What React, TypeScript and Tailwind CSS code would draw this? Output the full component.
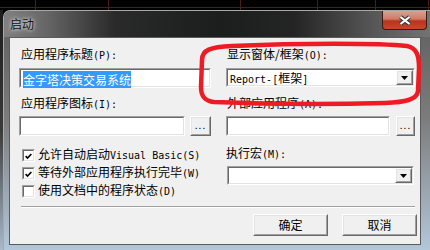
import { FC, ReactNode } from 'react';

// half-width latin, the way SimSun draws it next to CJK
const M: FC<{ children: ReactNode }> = ({ children }) => (
	<span className="[font-family:'DejaVu_Sans_Mono',monospace] text-[10px]">{children}</span>
);

const Sunken: FC<{ className?: string; children?: ReactNode }> = ({ className = '', children }) => (
	<div className={`border border-t-[#a0a0a0] border-l-[#a0a0a0] border-b-white border-r-white ${className}`}>
		<div className="flex h-full border border-t-[#696969] border-l-[#696969] border-b-[#e3e3e3] border-r-[#e3e3e3] bg-white">
			{children}
		</div>
	</div>
);

const Raised: FC<{ className?: string; children?: ReactNode }> = ({ className = '', children }) => (
	<div className={`border border-t-white border-l-white border-b-[#696969] border-r-[#696969] ${className}`}>
		<div className="flex h-full items-center justify-center border border-t-[#e3e3e3] border-l-[#e3e3e3] border-b-[#a0a0a0] border-r-[#a0a0a0] bg-[#f0f0f0]">
			{children}
		</div>
	</div>
);

const Combo: FC<{ className?: string; value?: ReactNode }> = ({ className = '', value }) => (
	<Sunken className={className}>
		<div className="flex-1 pl-[2px] leading-[15px]">{value}</div>
		<Raised className="w-[17px]">
			<svg width="7" height="4" viewBox="0 0 7 4">
				<path d="M0 0H7L3.5 4Z" fill="#000" />
			</svg>
		</Raised>
	</Sunken>
);

const Dots = () => <span className="-mt-[3px] text-[10px] leading-none tracking-[1px]">...</span>;

const Check: FC<{ checked?: boolean; children: ReactNode }> = ({ checked, children }) => (
	<div className="flex h-[18px] items-center gap-[3px]">
		<Sunken className="h-[13px] w-[13px] shrink-0">
			{checked && (
				<svg width="11" height="11" viewBox="0 0 11 11">
					<path d="M2 5L4.3 7.5L9 2.5" fill="none" stroke="#000" strokeWidth="2" />
				</svg>
			)}
		</Sunken>
		<span className="whitespace-nowrap leading-[14px]">{children}</span>
	</div>
);

export default function App() {
	return (
		<div className="relative h-[250px] w-[430px] overflow-hidden bg-black text-[12px] text-black [font-family:'Noto_Sans_CJK_SC',sans-serif]">
			<svg width="430" height="10" className="block">
				<line x1="0" y1="7.5" x2="430" y2="7.5" stroke="#4a2016" />
				{[35, 108, 240, 317, 375, 428].map((x) => (
					<line key={x} x1={x + 0.5} y1="0" x2={x + 0.5} y2="10" stroke="#4a2016" />
				))}
			</svg>
			<div className="flex">
				<div className="h-[240px] w-[3px] bg-[linear-gradient(180deg,#1c1c1c_0%,#3a3a3a_50%,#a9b9c9_100%)]" />
				<div className="h-[240px] w-[427px] overflow-hidden rounded-tl-[7px] border-l border-t border-[#a9a9a9] bg-[linear-gradient(180deg,#5e5e5e_0%,#7c7c7c_45%,#b3c7da_100%)]">
					{/* title bar */}
					<div className="flex h-[26px] items-start justify-between bg-[linear-gradient(90deg,#7f7f7f_0%,#666_10%,#2a2a2a_26%,#1b1e1d_50%,#242424_68%,#555_86%,#737373_100%)]">
						<span className="pl-[6px] pt-[6px] leading-[14px] text-[#111] [text-shadow:0_0_6px_#d8d8d8,0_0_3px_#e8e8e8]">启动</span>
						<div className="mr-[3px] flex h-[19px] w-[45px] items-center justify-center rounded-b-[4px] border border-t-0 border-[#3a1a12] bg-[linear-gradient(180deg,#dba091_0%,#cf7a66_45%,#b8341d_55%,#c8472b_100%)]">
							<svg width="14" height="11" viewBox="0 0 14 11">
								<path d="M2.5 2L11.5 9M11.5 2L2.5 9" stroke="#3b3b3b" strokeWidth="4.2" />
								<path d="M2.5 2L11.5 9M11.5 2L2.5 9" stroke="#fff" strokeWidth="2.2" />
							</svg>
						</div>
					</div>
					{/* client area */}
					<div className="ml-[5px] h-[208px] w-[412px] border border-[#5b5b5b] bg-[#f0f0f0]">
						<div className="grid grid-cols-[192px_189px] gap-x-[15px] pl-[9px] pt-[9px]">
							<div className="flex flex-col">
								<div className="h-[14px] pl-[2px] leading-[14px]">
									应用程序标题<M>(P):</M>
								</div>
								<Sunken className="mt-[7px] h-[20px]">
									<div className="pl-[2px] pt-px">
										<span className="bg-[#3399ff] leading-[15px] text-white">金字塔决策交易系统</span>
									</div>
								</Sunken>
								<div className="mt-[8px] h-[14px] pl-[2px] leading-[14px]">
									应用程序图标<M>(I):</M>
								</div>
								<div className="mt-[6px] flex h-[20px] gap-[5px]">
									<Sunken className="flex-1" />
									<Raised className="w-[21px]">
										<Dots />
									</Raised>
								</div>
							</div>
							<div className="flex flex-col">
								<div className="h-[14px] pl-px leading-[14px]">
									显示窗体/框架<M>(O):</M>
								</div>
								<Combo
									className="mt-[7px] h-[19px]"
									value={
										<>
											<M>Report-[</M>框架<M>]</M>
										</>
									}
								/>
								<div className="mt-[9px] h-[14px] pl-px leading-[14px]">
									外部应用程序<M>(A):</M>
								</div>
								<div className="mt-[6px] flex h-[20px] gap-[6px]">
									<Sunken className="flex-1" />
									<Raised className="w-[19px]">
										<Dots />
									</Raised>
								</div>
							</div>
						</div>
						<div className="mt-[10px] grid grid-cols-[192px_189px] gap-x-[15px] pl-[9px]">
							<div className="flex flex-col pl-[3px]">
								<Check checked>
									允许自动启动<M>Visual Basic(S)</M>
								</Check>
								<Check checked>
									等待外部应用程序执行完毕<M>(W)</M>
								</Check>
								<Check>
									使用文档中的程序状态<M>(D)</M>
								</Check>
							</div>
							<div className="flex flex-col">
								<div className="h-[14px] leading-[14px]">
									执行宏<M>(M):</M>
								</div>
								<Combo className="mx-px mt-[6px] h-[19px]" />
							</div>
						</div>
						<div className="ml-[11px] mt-[6px] h-[2px] w-[394px] border-b border-t border-b-white border-t-[#a0a0a0]" />
						<div className="mt-[6px] flex justify-end gap-[14px] pr-[3px]">
							<Raised className="h-[22px] w-[75px]">确定</Raised>
							<Raised className="h-[22px] w-[75px]">取消</Raised>
						</div>
					</div>
				</div>
			</div>
			{/* red marker drawn over the screenshot */}
			<svg className="pointer-events-none absolute inset-0" width="430" height="250">
				<path
					d="M232 46C300 43 380 43 407 46C417 48 419 56 419 68L418 91C417 100 405 102 385 103C320 105 260 104 214 102C204 101 201 96 201 87L202 60C202 50 210 47 232 46Z"
					fill="none"
					stroke="#ed1c24"
					strokeWidth="4.5"
					strokeLinejoin="round"
				/>
			</svg>
		</div>
	);
}
